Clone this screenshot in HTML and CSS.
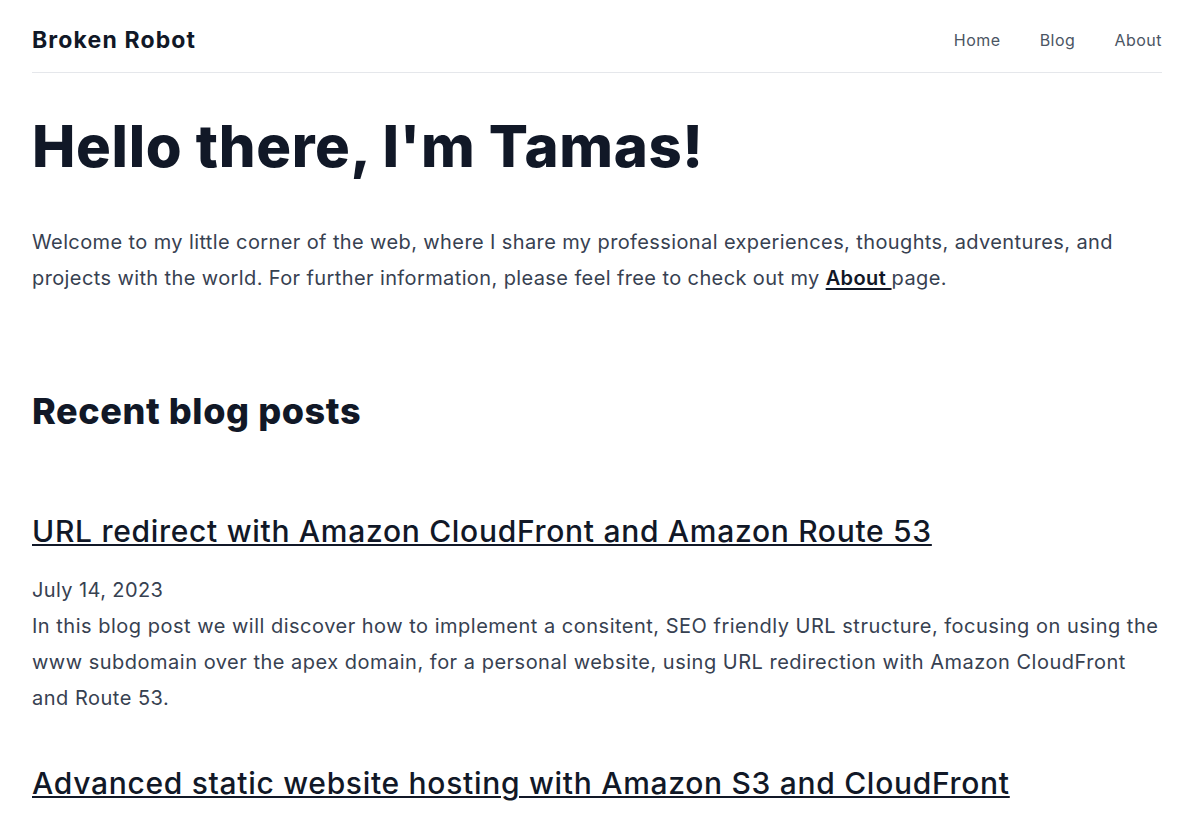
FILE: index.html
```html
<!DOCTYPE html>
<html lang="en">
<head>
<meta charset="utf-8">
<title>Broken Robot</title>
<link rel="stylesheet" href="styles.css">
</head>
<body>
<div class="page">
  <header class="site-header">
    <a class="logo" href="#">Broken Robot</a>
    <nav class="nav">
      <a href="#">Home</a>
      <a href="#">Blog</a>
      <a href="#">About</a>
    </nav>
  </header>
  <main>
    <h1 class="hero-title">Hello there, I'm Tamas!</h1>
    <p class="intro">Welcome to my little corner of the web, where I share my professional experiences, thoughts, adventures, and projects with the world. For further information, please feel free to check out my <a href="#">About </a>page.</p>
    <h2 class="section-title">Recent blog posts</h2>
    <article class="post">
      <h3 class="post-title"><a href="#">URL redirect with Amazon CloudFront and Amazon Route 53</a></h3>
      <p class="post-date">July 14, 2023</p>
      <p class="post-desc">In this blog post we will discover how to implement a consitent, SEO friendly URL structure, focusing on using the www subdomain over the apex domain, for a personal website, using URL redirection with Amazon CloudFront and Route 53.</p>
    </article>
    <article class="post">
      <h3 class="post-title"><a href="#">Advanced static website hosting with Amazon S3 and CloudFront</a></h3>
      <p class="post-date">May 29, 2023</p>
      <p class="post-desc">In this blog post we will discover how to host a static website with Amazon S3 and Amazon CloudFront, using advanced features for a secure and performant setup.</p>
    </article>
  </main>
</div>
</body>
</html>
```
FILE: styles.css
```css
* { box-sizing: border-box; }
html, body { margin: 0; padding: 0; background: #ffffff; }
body {
  font-family: Inter, "Open Sans", sans-serif;
  color: #374151;
}
a { color: inherit; }
.page { padding: 0 32px; }

.site-header {
  display: flex;
  align-items: center;
  justify-content: space-between;
  height: 73px;
  padding-top: 7px;
  border-bottom: 1px solid #e5e7eb;
}
.logo {
  font-size: 23px;
  font-weight: 700;
  color: #111827;
  text-decoration: none;
  letter-spacing: 1.15px;
  line-height: 28px;
}
.nav { display: flex; gap: 39px; }
.nav a {
  font-size: 16px;
  line-height: 24px;
  color: #4b5563;
  text-decoration: none;
  letter-spacing: 0.5px;
}

.hero-title {
  margin: 41px 0 0;
  font-size: 58px;
  line-height: 64px;
  font-weight: 800;
  color: #111827;
  letter-spacing: 0.66px;
}
.intro {
  margin: 46px 0 0;
  font-size: 20px;
  line-height: 36px;
  letter-spacing: 0.39px;
}
.intro a {
  color: #111827;
  font-weight: 600;
  text-decoration: underline;
  text-underline-offset: 3px;
}
.section-title {
  margin: 93px 0 0;
  font-size: 36px;
  line-height: 44px;
  font-weight: 800;
  color: #111827;
  letter-spacing: 0.6px;
}
.post { margin-top: 78px; }
.post + .post { margin-top: 47px; }
.post-title {
  margin: 0;
  font-size: 30px;
  line-height: 40px;
  font-weight: 500;
  color: #111827;
  letter-spacing: 0.7px;
}
.post-title a {
  text-decoration: underline;
  text-decoration-thickness: 2px;
  text-underline-offset: 2px;
}
.post-date {
  margin: 21px 0 0;
  font-size: 20px;
  line-height: 36px;
  letter-spacing: 0.39px;
}
.post-desc {
  margin: 0;
  font-size: 20px;
  line-height: 36px;
  letter-spacing: 0.5px;
}
```
